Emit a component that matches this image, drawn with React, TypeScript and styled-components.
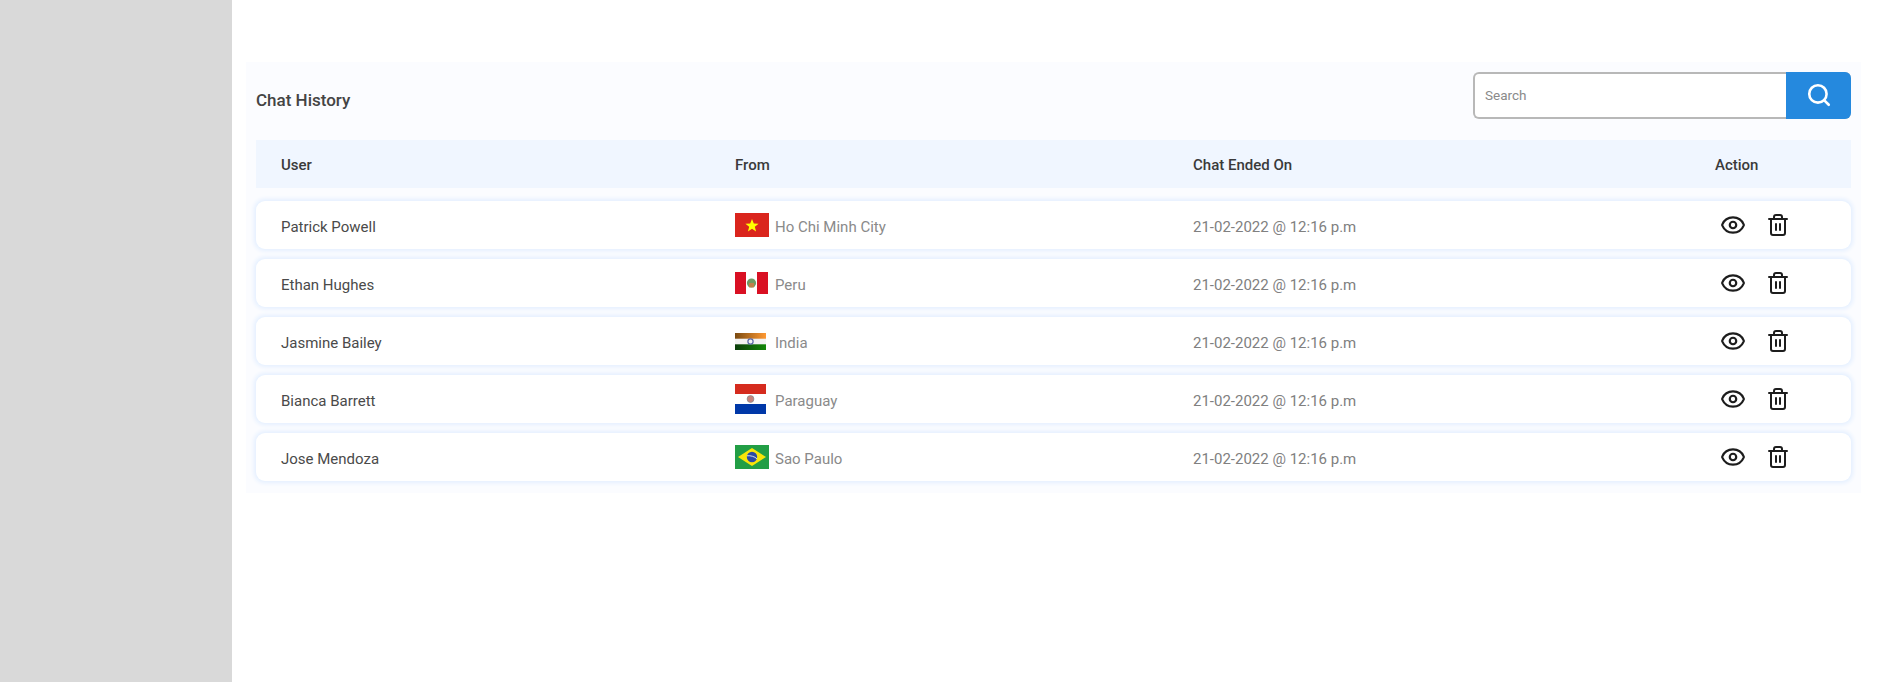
import React from "react";
import styled, { createGlobalStyle } from "styled-components";
import { Eye, Search, Trash2 } from "lucide-react";

const Global = createGlobalStyle`
  html, body { margin: 0; padding: 0; background: #fff; }
  body { font-family: Roboto, "Liberation Sans", sans-serif; }
`;
const Page = styled.div`display: flex; min-height: 682px;`;
const Sidebar = styled.aside`width: 232px; flex: none; background: #d9d9d9;`;
const Main = styled.main`flex: 1; min-width: 0; padding: 62px 16px 0 14px;`;
const Panel = styled.section`background: #fbfcff; padding: 10px 10px 12px 10px;`;
const TopBar = styled.div`display: flex; align-items: center; justify-content: space-between; height: 46px; margin-bottom: 22px;`;
const Title = styled.h1`margin: 0; padding-top: 10px; font-size: 17px; font-weight: 500; color: #444;`;
const SearchBox = styled.div`display: flex; width: 378px; height: 47px; box-sizing: border-box; border: 2px solid #b8b8b8; border-right: 0; border-radius: 6px; background: #fff;`;
const SearchInput = styled.input`flex: 1; min-width: 0; border: 0; outline: 0; background: transparent; padding: 0 10px; font: 400 13.5px Roboto, sans-serif; color: #555; &::placeholder { color: #8a8a8a; }`;
const SearchButton = styled.button`width: 65px; flex: none; margin: -2px 0; border: 0; border-radius: 0 6px 6px 0; background: #2589de; color: #fff; display: flex; align-items: center; justify-content: center; padding: 0;`;
const Grid = styled.div`display: grid; grid-template-columns: 454px 458px 522px 1fr; align-items: center; box-sizing: border-box; height: 48px; padding-left: 25px;`;
const Head = styled(Grid)`background: #f0f6ff; margin-bottom: 13px; padding-top: 2px; font-size: 15px; font-weight: 500; color: #3a3a3a;`;
const Rows = styled.div`display: flex; flex-direction: column; gap: 10px;`;
const Row = styled(Grid)`background: #fff; border-radius: 9px; box-shadow: 0 0 4px 2px #e4efff; font-size: 15px;`;
const Name = styled.div`padding-top: 3px; color: #4a4a4a;`;
const Place = styled.div`display: flex; align-items: center; gap: 7px; color: #8a8a8a;`;
const PlaceName = styled.span`padding-top: 3px;`;
const DateCell = styled.div`padding-top: 3px; color: #808080;`;
const Actions = styled.div`display: flex; align-items: center; gap: 20px; padding-left: 5px; color: #1d1d1d;`;
const FlagSlot = styled.div`display: flex; width: 33px; flex: none;`;
const Flag = styled.svg`display: block; flex: none;`;

const Vietnam = () => (
  <Flag width="34" height="24" viewBox="0 0 34 24"><rect width="34" height="24" fill="#da251d" /><polygon fill="#ff0" points="17,6 18.8,10.6 23.6,10.8 19.8,13.8 21.1,18.5 17,15.8 12.9,18.5 14.2,13.8 10.4,10.8 15.2,10.6" /></Flag>
);
const Peru = () => (
  <Flag width="33" height="22" viewBox="0 0 33 22"><rect width="33" height="22" fill="#fff" /><rect width="11" height="22" fill="#d91023" /><rect x="22" width="11" height="22" fill="#d91023" /><circle cx="16.5" cy="11" r="4.6" fill="#6f9a63" /><rect x="14" y="11" width="5" height="4.4" fill="#c0804a" /></Flag>
);
const India = () => (
  <Flag width="31" height="17" viewBox="0 0 31 17">
    <defs><linearGradient id="sf" x1="0" x2="1" y1="0" y2="0"><stop offset="0" stopColor="#7a4a10" /><stop offset="1" stopColor="#ff9933" /></linearGradient><linearGradient id="gr" x1="0" x2="1" y1="0" y2="0"><stop offset="0" stopColor="#0a3d0a" /><stop offset="1" stopColor="#138808" /></linearGradient></defs>
    <rect width="31" height="17" fill="#f2f2f2" /><rect width="31" height="5.7" fill="url(#sf)" /><rect y="11.3" width="31" height="5.7" fill="url(#gr)" /><circle cx="15.5" cy="8.5" r="2.6" fill="none" stroke="#5a6aa8" strokeWidth="1.2" />
  </Flag>
);
const Paraguay = () => (
  <Flag width="31" height="30" viewBox="0 0 31 30"><rect width="31" height="30" fill="#fff" /><rect width="31" height="10" fill="#d52b1e" /><rect y="20" width="31" height="10" fill="#0038a8" /><circle cx="15.5" cy="15" r="3.4" fill="#c9837c" stroke="#8c8c8c" strokeWidth="0.8" /></Flag>
);
const Brazil = () => (
  <Flag width="34" height="24" viewBox="0 0 34 24"><rect width="34" height="24" fill="#229e45" /><polygon fill="#f8e509" points="17,3 31,12 17,21 3,12" /><circle cx="17" cy="12" r="5.2" fill="#2b49a3" /><path d="M12 10.8c3.5-.4 7.5.6 10 3" stroke="#fff" strokeWidth="0.8" fill="none" /></Flag>
);

const data = [
  { name: "Patrick Powell", place: "Ho Chi Minh City", flag: <Vietnam /> },
  { name: "Ethan Hughes", place: "Peru", flag: <Peru /> },
  { name: "Jasmine Bailey", place: "India", flag: <India /> },
  { name: "Bianca Barrett", place: "Paraguay", flag: <Paraguay /> },
  { name: "Jose Mendoza", place: "Sao Paulo", flag: <Brazil /> },
];

export default function App() {
  return (
    <Page>
      <Global />
      <Sidebar />
      <Main>
        <Panel>
          <TopBar>
            <Title>Chat History</Title>
            <SearchBox>
              <SearchInput placeholder="Search" />
              <SearchButton aria-label="Search"><Search size={26} strokeWidth={2.4} /></SearchButton>
            </SearchBox>
          </TopBar>
          <Head><div>User</div><div>From</div><div>Chat Ended On</div><div>Action</div></Head>
          <Rows>
            {data.map((d) => (
              <Row key={d.name}>
                <Name>{d.name}</Name>
                <Place><FlagSlot>{d.flag}</FlagSlot><PlaceName>{d.place}</PlaceName></Place>
                <DateCell>21-02-2022 @ 12:16 p.m</DateCell>
                <Actions><Eye size={26} strokeWidth={2} /><Trash2 size={24} strokeWidth={2} /></Actions>
              </Row>
            ))}
          </Rows>
        </Panel>
      </Main>
    </Page>
  );
}
